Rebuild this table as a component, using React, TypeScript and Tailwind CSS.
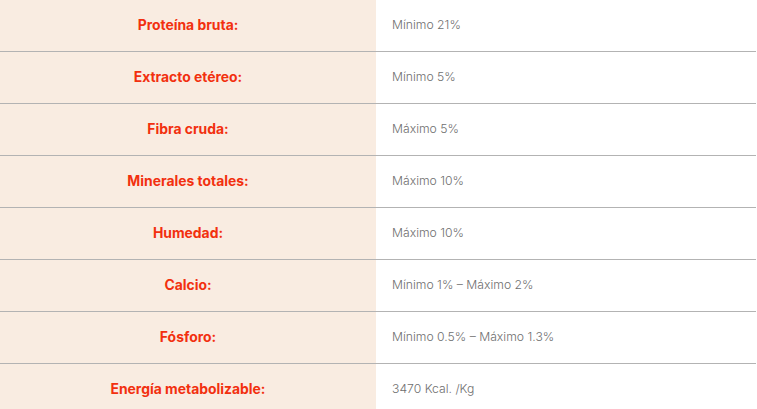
const rows = [
  { label: 'Proteína bruta:', value: 'Mínimo 21%' },
  { label: 'Extracto etéreo:', value: 'Mínimo 5%' },
  { label: 'Fibra cruda:', value: 'Máximo 5%' },
  { label: 'Minerales totales:', value: 'Máximo 10%' },
  { label: 'Humedad:', value: 'Máximo 10%' },
  { label: 'Calcio:', value: 'Mínimo 1% – Máximo 2%' },
  { label: 'Fósforo:', value: 'Mínimo 0.5% – Máximo 1.3%' },
  { label: 'Energía metabolizable:', value: '3470 Kcal. /Kg' },
];

export default function App() {
  return (
    <div className="w-[756px] bg-white font-['Inter',sans-serif]">
      {rows.map((row, i) => (
        <div
          key={i}
          className="flex h-[52px] border-b border-[#b3b3b3]"
        >
          <div className="flex w-[376px] items-center justify-center bg-[#f9ece1] text-[13.9px] font-bold text-[#f2300f]">
            {row.label}
          </div>
          <div className="flex flex-1 items-center pl-4 text-[12.2px] font-light text-[#6f6f6f]">
            {row.value}
          </div>
        </div>
      ))}
    </div>
  );
}
